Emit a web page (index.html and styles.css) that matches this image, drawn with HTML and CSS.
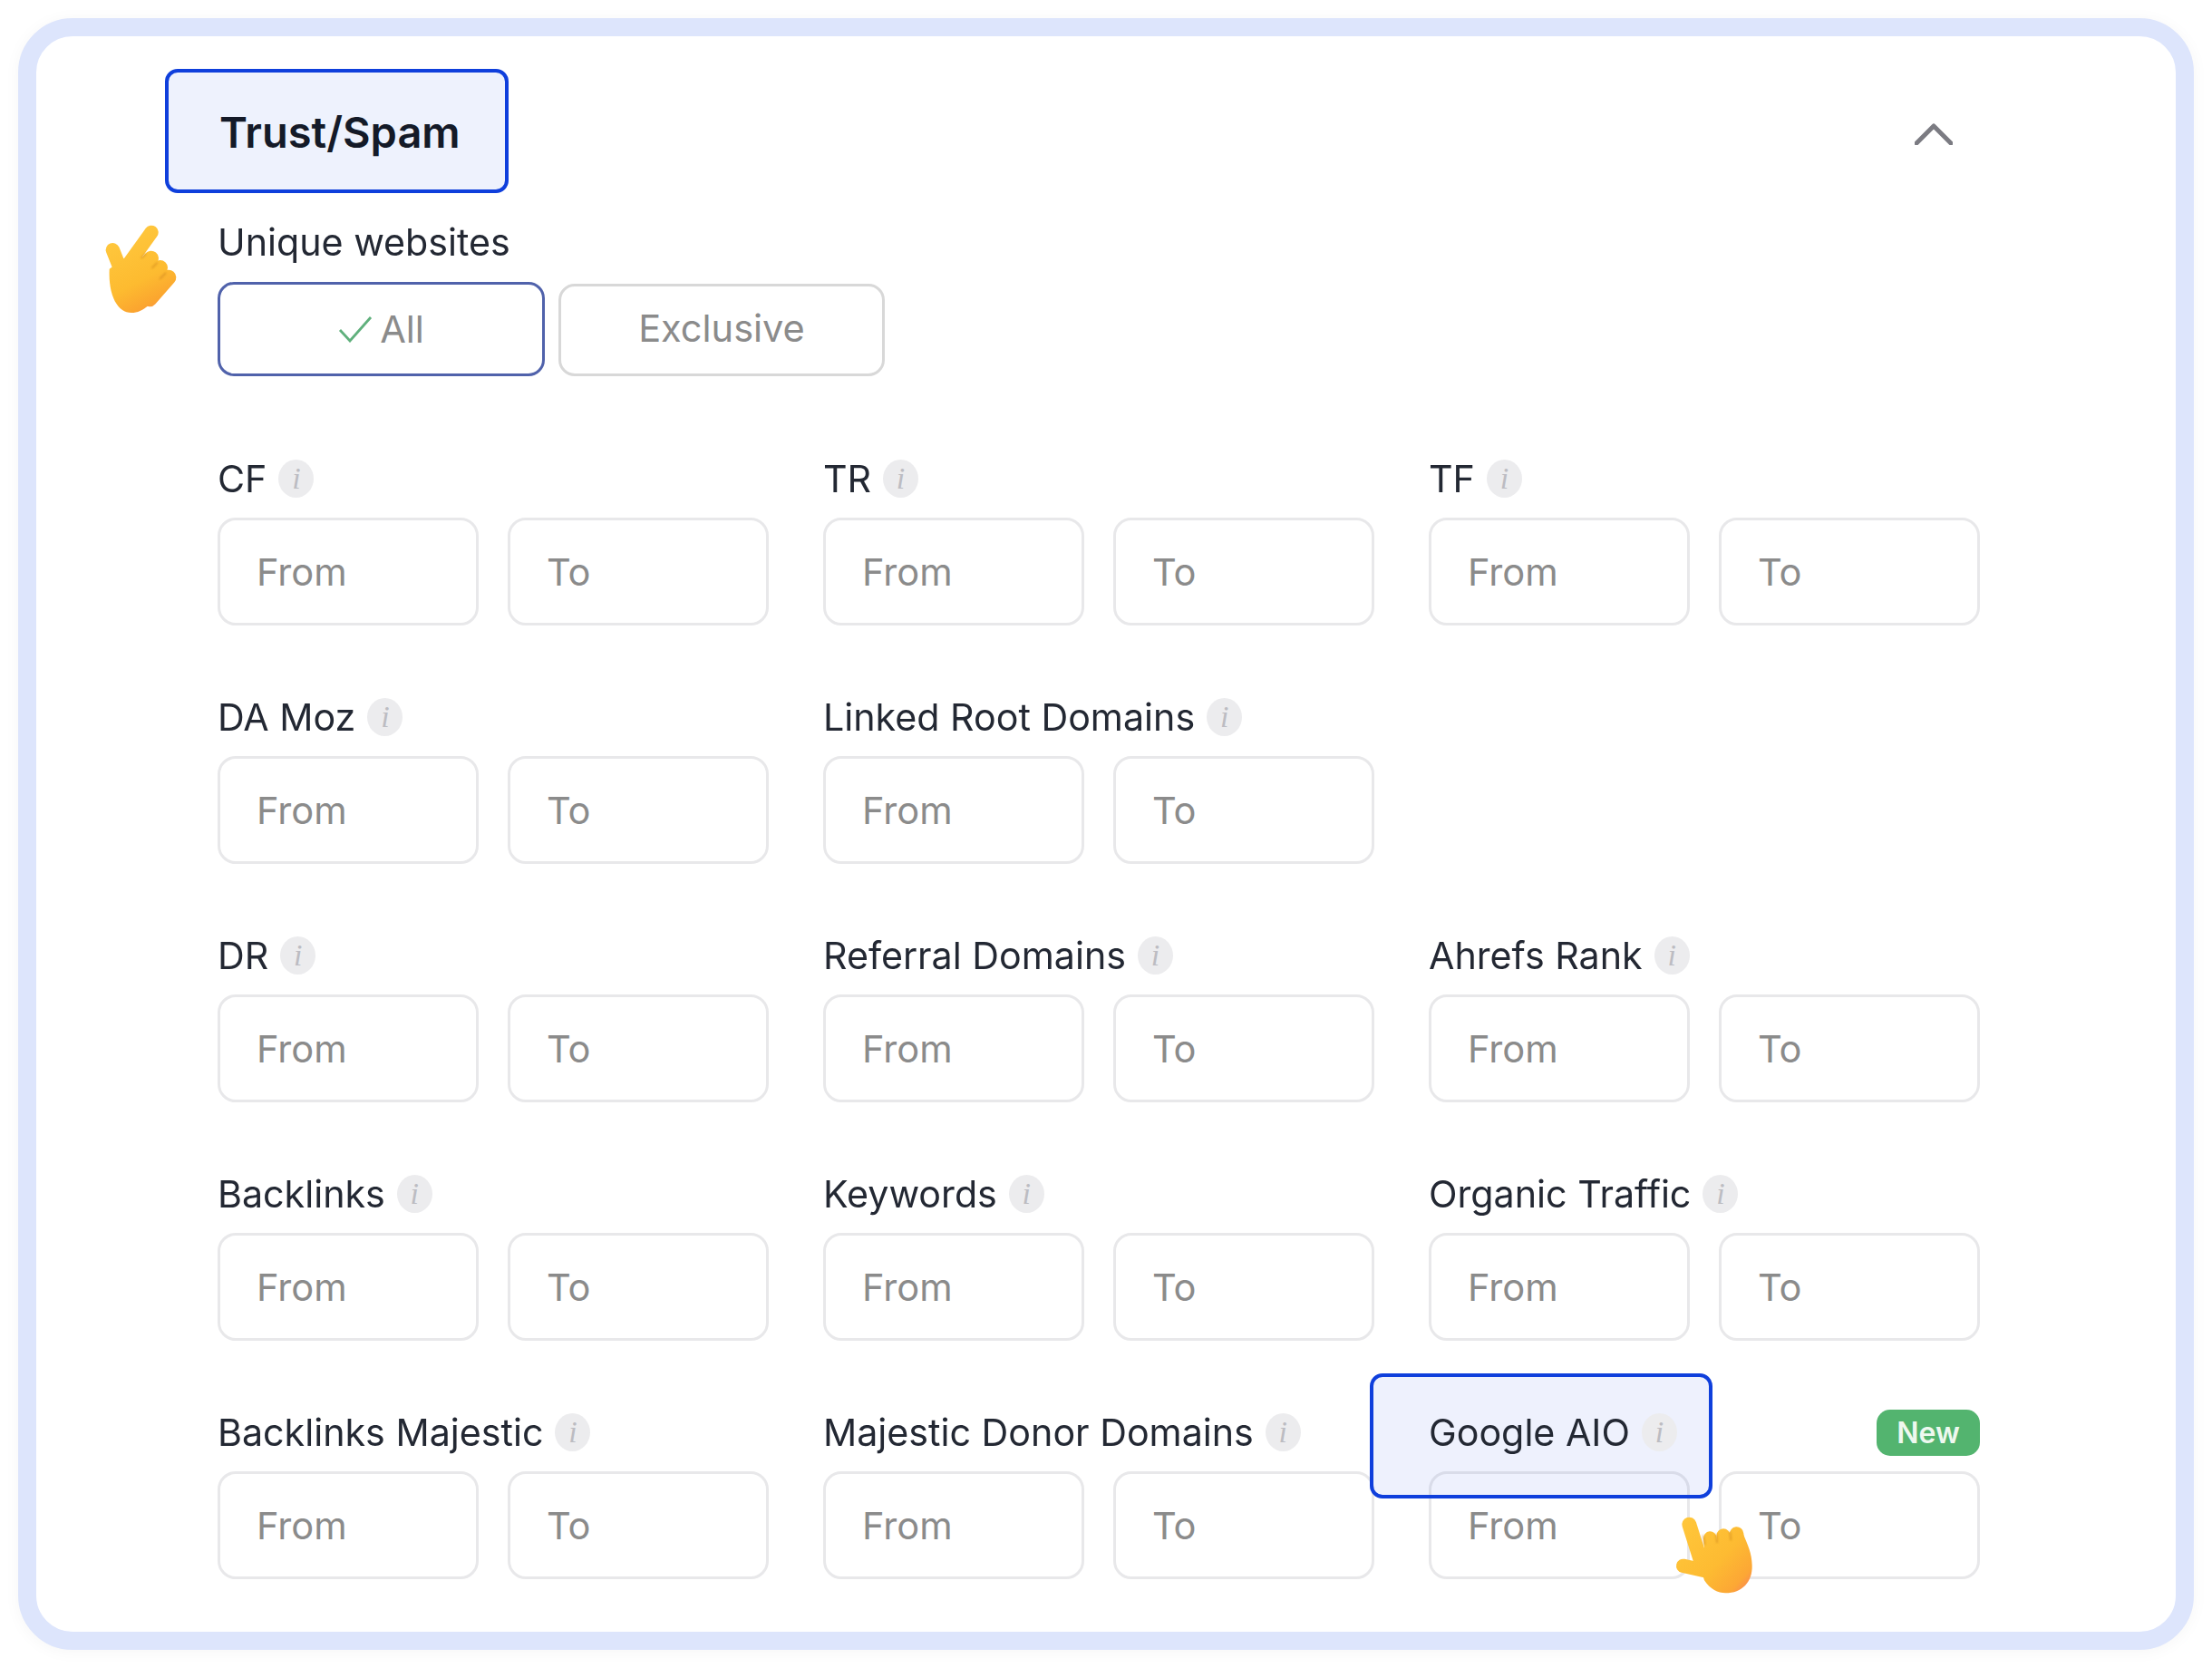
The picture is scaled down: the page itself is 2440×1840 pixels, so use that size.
FILE: index.html
```html
<!DOCTYPE html>
<html lang="en">
<head>
<meta charset="utf-8">
<title>Trust/Spam filters</title>
<link rel="stylesheet" href="styles.css">
</head>
<body>
<main class="card">
  <header class="head">
    <h2 class="title">Trust/Spam</h2>
    <svg class="chevron" width="42" height="24" viewBox="0 0 42 24"><path d="M2 22 L21 3 L40 22" fill="none" stroke="#7b7b82" stroke-width="5" stroke-linecap="round" stroke-linejoin="round"/></svg>
  </header>
  <div class="unique">
    <div class="label-text">Unique websites</div>
    <div class="toggle">
      <button class="opt opt-on"><svg class="check" width="38" height="30" viewBox="0 0 38 30"><path d="M2 16 L13 28 L36 2" fill="none" stroke="#5fb07c" stroke-width="2.8"/></svg>All</button>
      <button class="opt opt-off">Exclusive</button>
    </div>
  </div>
  <div class="grid">
    <div class="field"><div class="label"><span class="label-text">CF</span><i class="info">i</i></div><div class="pair"><input class="box" placeholder="From"><input class="box" placeholder="To"></div></div>
    <div class="field"><div class="label"><span class="label-text">TR</span><i class="info">i</i></div><div class="pair"><input class="box" placeholder="From"><input class="box" placeholder="To"></div></div>
    <div class="field"><div class="label"><span class="label-text">TF</span><i class="info">i</i></div><div class="pair"><input class="box" placeholder="From"><input class="box" placeholder="To"></div></div>

    <div class="field"><div class="label"><span class="label-text">DA Moz</span><i class="info">i</i></div><div class="pair"><input class="box" placeholder="From"><input class="box" placeholder="To"></div></div>
    <div class="field"><div class="label"><span class="label-text">Linked Root Domains</span><i class="info">i</i></div><div class="pair"><input class="box" placeholder="From"><input class="box" placeholder="To"></div></div>
    <div class="field"></div>

    <div class="field"><div class="label"><span class="label-text">DR</span><i class="info">i</i></div><div class="pair"><input class="box" placeholder="From"><input class="box" placeholder="To"></div></div>
    <div class="field"><div class="label"><span class="label-text">Referral Domains</span><i class="info">i</i></div><div class="pair"><input class="box" placeholder="From"><input class="box" placeholder="To"></div></div>
    <div class="field"><div class="label"><span class="label-text">Ahrefs Rank</span><i class="info">i</i></div><div class="pair"><input class="box" placeholder="From"><input class="box" placeholder="To"></div></div>

    <div class="field"><div class="label"><span class="label-text">Backlinks</span><i class="info">i</i></div><div class="pair"><input class="box" placeholder="From"><input class="box" placeholder="To"></div></div>
    <div class="field"><div class="label"><span class="label-text">Keywords</span><i class="info">i</i></div><div class="pair"><input class="box" placeholder="From"><input class="box" placeholder="To"></div></div>
    <div class="field"><div class="label"><span class="label-text">Organic Traffic</span><i class="info">i</i></div><div class="pair"><input class="box" placeholder="From"><input class="box" placeholder="To"></div></div>

    <div class="field"><div class="label"><span class="label-text">Backlinks Majestic</span><i class="info">i</i></div><div class="pair"><input class="box" placeholder="From"><input class="box" placeholder="To"></div></div>
    <div class="field"><div class="label"><span class="label-text">Majestic Donor Domains</span><i class="info">i</i></div><div class="pair"><input class="box" placeholder="From"><input class="box" placeholder="To"></div></div>
    <div class="field field-new">
      <div class="highlight"></div>
      <div class="label"><span class="label-text">Google AIO</span><i class="info">i</i><span class="badge">New</span></div>
      <div class="pair"><input class="box" placeholder="From"><input class="box" placeholder="To"></div>
    </div>
  </div>

  <svg class="hand hand-one" width="130" height="130" viewBox="0 0 390 390">
    <defs>
      <linearGradient id="h1" gradientUnits="userSpaceOnUse" x1="120" y1="60" x2="270" y2="345">
        <stop offset="0" stop-color="#ffc93f"/><stop offset=".6" stop-color="#fdbb30"/><stop offset=".85" stop-color="#fba52f"/><stop offset="1" stop-color="#f98a55"/>
      </linearGradient>
      <filter id="b1" x="-30%" y="-30%" width="160%" height="160%"><feGaussianBlur stdDeviation="3"/></filter>
    </defs>
    <g fill="none" stroke="url(#h1)" stroke-linecap="round">
      <path d="M103 137 L128 200" stroke-width="46"/>
      <path d="M231 79 L160 178" stroke-width="46"/>
      <path d="M230 165 L185 220" stroke-width="50"/>
      <path d="M260 196 L205 255" stroke-width="50"/>
      <path d="M288 228 L225 300" stroke-width="50"/>
    </g>
    <path d="M92 200 C88 290 120 345 165 345 C205 345 235 310 262 272 L200 160 L140 165 Z" fill="url(#h1)"/>
    <g fill="none" stroke="#c9811b" stroke-width="5" stroke-linecap="round" filter="url(#b1)" opacity=".6">
      <path d="M212 150 L199 163"/>
      <path d="M250 180 L234 196"/>
      <path d="M278 214 L260 232"/>
    </g>
  </svg>

  <svg class="hand hand-two" width="130" height="130" viewBox="0 0 390 390">
    <defs>
      <linearGradient id="h2" gradientUnits="userSpaceOnUse" x1="110" y1="90" x2="345" y2="300">
        <stop offset="0" stop-color="#ffc63a"/><stop offset=".55" stop-color="#fdbb32"/><stop offset=".85" stop-color="#fca735"/><stop offset="1" stop-color="#f9825c"/>
      </linearGradient>
      <filter id="b2" x="-30%" y="-30%" width="160%" height="160%"><feGaussianBlur stdDeviation="3"/></filter>
    </defs>
    <g fill="none" stroke="url(#h2)" stroke-linecap="round">
      <path d="M130 95 L168 215" stroke-width="48"/>
      <path d="M110 232 L190 250" stroke-width="46"/>
      <path d="M199 140 L205 210" stroke-width="44"/>
      <path d="M243 132 L245 210" stroke-width="46"/>
      <path d="M287 126 L295 210" stroke-width="46"/>
    </g>
    <path d="M155 200 L180 280 C200 310 225 322 250 322 C305 322 340 285 338 230 C337 190 325 165 308 125 L200 150 Z" fill="url(#h2)"/>
    <g fill="none" stroke="#c9811b" stroke-width="5" stroke-linecap="round" filter="url(#b2)" opacity=".6">
      <path d="M176 132 L181 160"/>
      <path d="M220 128 L222 154"/>
      <path d="M265 120 L268 146"/>
    </g>
  </svg>
</main>
</body>
</html>
```

FILE: styles.css
```css
* { box-sizing: border-box; }
html, body { margin: 0; background: #fff; }
body { padding: 20px; font-family: Inter, "Noto Sans", sans-serif; color: #1f2430; }
.card {
  position: relative;
  width: 2400px;
  height: 1800px;
  border: 20px solid #dde5fc;
  border-radius: 60px;
  background: #fff;
  padding: 36px 216px 0 200px;
  box-shadow: 0 2px 18px rgba(0, 0, 0, .04);
}
.head { display: flex; justify-content: space-between; align-items: center; height: 137px; }
.title {
  margin: 0 0 0 -58px;
  width: 379px;
  height: 137px;
  display: flex;
  align-items: center;
  padding: 2px 0 0 56px;
  border: 4px solid #0f3fdc;
  border-radius: 14px;
  background: #eef2fd;
  font-size: 47px;
  font-weight: 600;
  color: #141a28;
}
.chevron { margin: 6px 30px 0 0; }
.unique { margin-top: 30px; }
.label-text { font-size: 41.2px; line-height: 48px; color: #232833; filter: blur(.4px); }
.toggle { display: flex; align-items: flex-end; gap: 15px; margin-top: 20px; }
.opt {
  width: 361px;
  height: 102px;
  display: flex;
  align-items: center;
  justify-content: center;
  gap: 8px;
  border: 3px solid #d8d8d8;
  border-radius: 18px;
  background: #fff;
  font: 400 41.5px Inter, sans-serif;
  color: #8b8b8b;
}
.opt-on { height: 104px; border-color: #5062ab; }
.opt-off { width: 360px; padding-bottom: 6px; }
.grid {
  display: grid;
  grid-template-columns: repeat(3, 1fr);
  column-gap: 60px;
  row-gap: 79px;
  margin-top: 91px;
  width: 1944px;
}
.field { position: relative; min-height: 184px; }
.label { display: flex; align-items: center; gap: 13px; height: 44px; margin-bottom: 21px; position: relative; }
.info {
  width: 39px;
  height: 42px;
  border-radius: 50%;
  background: #ececee;
  color: #bcbcc2;
  font: italic 400 34px/42px "Liberation Serif", serif;
  text-align: center;
}
.pair { display: grid; grid-template-columns: 1fr 1fr; column-gap: 32px; }
.box {
  width: 100%;
  min-width: 0;
  height: 119px;
  padding: 0 0 0 40px;
  border: 3px solid #e8e8ea;
  border-radius: 20px;
  background: transparent;
  font: 400 41.6px Inter, sans-serif;
  outline: none;
}
.box::placeholder { color: #8b8b8b; opacity: 1; }
.badge {
  margin-left: auto;
  width: 114px;
  height: 51px;
  display: flex;
  align-items: center;
  justify-content: center;
  border-radius: 15px;
  background: #53b46f;
  color: #eef8ef;
  font-size: 32px;
  font-weight: 600;
}
.highlight {
  position: absolute;
  left: -65px;
  top: -43px;
  width: 378px;
  height: 138px;
  border: 4px solid #0f3fdc;
  border-radius: 14px;
  background: rgba(62, 100, 232, .09);
  pointer-events: none;
}
.hand { position: absolute; }
.hand-one { left: 50px; top: 190px; }
.hand-two { left: 1780px; top: 1610px; }
```
